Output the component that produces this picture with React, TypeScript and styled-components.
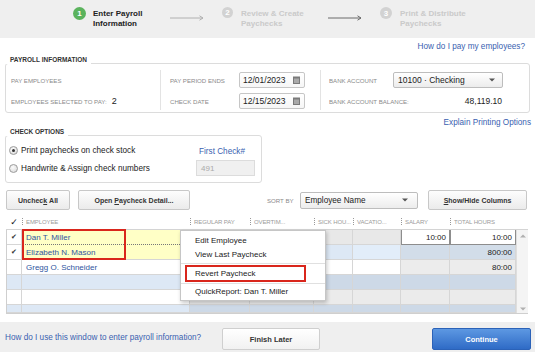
import React from "react";
import styled, { createGlobalStyle } from "styled-components";

const Global = createGlobalStyle`
  html, body { margin: 0; padding: 0; }
  body { font-family: "Liberation Sans", Arial, sans-serif; background: #fff; color: #222; }
  * { box-sizing: border-box; }
`;

const Page = styled.div`
  width: 535px;
  height: 352px;
  display: flex;
  flex-direction: column;
  overflow: hidden;
  background: #fff;
`;

/* ---------- Stepper ---------- */
const Stepper = styled.div`
  flex: none;
  height: 38px;
  background: #efefef;
  display: flex;
  align-items: flex-start;
  padding: 9px 0 0 73px;
`;
const Step = styled.div<{ $w?: number; $gap: number }>`
  flex: none;
  width: ${(p) => (p.$w ? `${p.$w}px` : "auto")};
  display: flex;
  align-items: flex-start;
  gap: ${(p) => p.$gap}px;
`;
const StepNum = styled.div<{ $active?: boolean; $size: number }>`
  flex: none;
  width: ${(p) => p.$size}px;
  height: ${(p) => p.$size}px;
  margin-top: -2px;
  border-radius: 50%;
  background: ${(p) => (p.$active ? "#5bb35d" : "#d2d2d2")};
  color: #fff;
  font-size: 8px;
  font-weight: bold;
  display: flex;
  align-items: center;
  justify-content: center;
`;
const StepText = styled.div<{ $active?: boolean }>`
  font-size: 8px;
  font-weight: bold;
  line-height: 10px;
  color: ${(p) => (p.$active ? "#222" : "#cacaca")};
`;
const ArrowBox = styled.div<{ $mr: number }>`
  flex: none;
  width: 34px;
  height: 6px;
  margin: 6px ${(p) => p.$mr}px 0 0;
  display: flex;
`;

/* ---------- Main ---------- */
const Main = styled.main`
  flex: 1;
  background: #fff;
  padding: 3px 4px 0 5px;
  display: flex;
  flex-direction: column;
`;
const LinkRow = styled.div<{ $mt: number; $pr: number }>`
  height: 12px;
  line-height: 12px;
  margin-top: ${(p) => p.$mt}px;
  padding-right: ${(p) => p.$pr}px;
  display: flex;
  justify-content: flex-end;
`;
const Link = styled.a`
  font-size: 8.2px;
  color: #3a5fb0;
  text-decoration: none;
  white-space: nowrap;
`;
const GroupTitle = styled.div<{ $mt: number }>`
  position: relative;
  z-index: 1;
  align-self: flex-start;
  margin-top: ${(p) => p.$mt}px;
  padding: 0 4px 0 5px;
  background: #fff;
  font-size: 6.5px;
  font-weight: bold;
  line-height: 8px;
  color: #333;
  text-transform: uppercase;
`;
const GroupBox = styled.div<{ $w?: number; $h: number }>`
  margin-top: -1px;
  width: ${(p) => (p.$w ? `${p.$w}px` : "auto")};
  margin-right: ${(p) => (p.$w ? 0 : 1)}px;
  height: ${(p) => p.$h}px;
  border: 1px solid #dcdcdc;
  border-radius: 3px;
  display: flex;
`;
const PayCol = styled.div<{ $w?: number; $pl: number; $divider?: boolean }>`
  flex: ${(p) => (p.$w ? "none" : "1")};
  width: ${(p) => (p.$w ? `${p.$w}px` : "auto")};
  height: 40px;
  margin-top: 6px;
  padding: 2px 0 0 ${(p) => p.$pl}px;
  border-left: ${(p) => (p.$divider ? "1px solid #e3e3e3" : "none")};
  display: flex;
  flex-direction: column;
  gap: 5px;
`;
const Field = styled.div`
  height: 16px;
  display: flex;
  align-items: center;
`;
const Label = styled.span<{ $w?: number }>`
  flex: none;
  width: ${(p) => (p.$w ? `${p.$w}px` : "auto")};
  font-size: 6.1px;
  color: #8a8a8a;
  text-transform: uppercase;
  white-space: nowrap;
`;
const Count = styled.span`
  margin-left: 5px;
  font-size: 9px;
  color: #222;
`;
const InputBox = styled.div<{ $w: number }>`
  width: ${(p) => p.$w}px;
  height: 16px;
  border: 1px solid #c6c6c6;
  border-radius: 2px;
  background: linear-gradient(#ffffff, #f6f6f6);
  padding: 0 4px 0 3px;
  display: flex;
  align-items: center;
  justify-content: space-between;
  font-size: 8.5px;
  color: #222;
`;
const SelectBox = styled(InputBox)`
  background: linear-gradient(#ffffff, #ececec);
  border-color: #bdbdbd;
  padding: 0 7px 0 4px;
`;
const Amount = styled.span`
  width: 110px;
  text-align: right;
  padding-right: 1px;
  font-size: 8.5px;
  color: #222;
`;

/* ---------- Check options ---------- */
const RadioCol = styled.div`
  width: 190px;
  padding: 8px 0 0 3px;
  display: flex;
  flex-direction: column;
  gap: 6px;
`;
const RadioRow = styled.label`
  height: 12px;
  display: flex;
  align-items: center;
  gap: 3px;
  font-size: 8.2px;
  color: #222;
`;
const Radio = styled.span<{ $on?: boolean }>`
  flex: none;
  width: 9px;
  height: 9px;
  border-radius: 50%;
  border: 1px solid #9c9c9c;
  background: radial-gradient(circle at 40% 35%, #fbfbfb, #d6d6d6);
  display: flex;
  align-items: center;
  justify-content: center;
  &::after {
    content: "";
    width: 3px;
    height: 3px;
    border-radius: 50%;
    background: ${(p) => (p.$on ? "#333" : "transparent")};
  }
`;
const FirstCheckCol = styled.div`
  width: 59px;
  padding-top: 10px;
  display: flex;
  flex-direction: column;
  gap: 2px;
`;
const FirstCheckLabel = styled.div`
  height: 12px;
  line-height: 12px;
  padding-left: 3px;
  font-size: 8.2px;
  color: #3a5fb0;
`;
const DisabledInput = styled.div`
  height: 16px;
  background: #f0f0f0;
  border: 1px solid #dcdcdc;
  padding-left: 4px;
  display: flex;
  align-items: center;
  font-size: 8px;
  color: #aaa;
`;

/* ---------- Buttons row ---------- */
const ButtonRow = styled.div`
  margin-top: 7px;
  height: 20px;
  display: flex;
  align-items: center;
`;
const Button = styled.button<{ $w: number; $ml: number }>`
  flex: none;
  width: ${(p) => p.$w}px;
  height: 20px;
  margin-left: ${(p) => p.$ml}px;
  padding: 0;
  border: 1px solid #c8c8c8;
  border-radius: 2px;
  background: linear-gradient(#fdfdfd, #ebebeb);
  font-family: "Liberation Sans", Arial, sans-serif;
  font-size: 7px;
  font-weight: bold;
  color: #333;
  display: flex;
  align-items: center;
  justify-content: center;
  u { text-decoration: underline; }
`;
const SortLabel = styled(Label)`
  margin-left: 77px;
  width: 33px;
`;
const SortSelect = styled(SelectBox)`
  height: 17px;
  font-size: 8.2px;
  padding-right: 9px;
`;

/* ---------- Table ---------- */
const Table = styled.div`
  position: relative;
  margin: 4px 0 0 1px;
  width: 522px;
`;
const HeaderRow = styled.div`
  height: 16px;
  display: flex;
  align-items: center;
  border-bottom: 1px solid #d4d4d4;
`;
const HeadCell = styled.div<{ $w: number }>`
  flex: none;
  width: ${(p) => p.$w}px;
  display: flex;
  align-items: center;
  font-size: 6px;
  letter-spacing: -0.1px;
  color: #9a9a9a;
  white-space: nowrap;
  &::before {
    content: "";
    display: block;
    flex: none;
    height: 7px;
    border-left: 1px dotted #999;
    margin-right: 3px;
  }
`;
const HeadCheck = styled.div`
  flex: none;
  width: 16px;
  text-align: center;
  font-family: "DejaVu Sans", sans-serif;
  font-size: 9px;
  font-weight: bold;
  color: #111;
`;
const Body = styled.div`
  display: flex;
  border-left: 1px solid #cfcfcf;
  border-bottom: 1px solid #cfcfcf;
`;
const Rows = styled.div`
  width: 509px;
  display: flex;
  flex-direction: column;
`;
const Row = styled.div<{ $h: number }>`
  flex: none;
  height: ${(p) => p.$h}px;
  display: flex;
  overflow: hidden;
`;
const Cell = styled.div<{
  $w: number;
  $bg: string;
  $right?: boolean;
  $boxed?: boolean;
  $dotted?: boolean;
  $blue?: boolean;
}>`
  flex: none;
  width: ${(p) => p.$w}px;
  height: 100%;
  background: ${(p) => p.$bg};
  border-right: 1px solid ${(p) => (p.$boxed ? "#8d8d8d" : "#d6d6d6")};
  border-bottom: ${(p) => (p.$dotted ? "1px dotted #777" : p.$boxed ? "1px solid #8d8d8d" : "1px solid #d6d6d6")};
  ${(p) => (p.$boxed ? "border-left: 1px solid #8d8d8d;" : "")}
  padding: 0 3px 0 4px;
  display: flex;
  align-items: center;
  justify-content: ${(p) => (p.$right ? "flex-end" : "flex-start")};
  font-size: 8px;
  color: ${(p) => (p.$blue ? "#2f55a0" : "#222")};
  white-space: nowrap;
`;
const CheckCell = styled(Cell)`
  justify-content: center;
  padding: 0;
  font-family: "DejaVu Sans", sans-serif;
  font-size: 7px;
  color: #333;
`;
const ScrollBar = styled.div`
  width: 12px;
  background: #f4f4f4;
  border-left: 1px solid #dedede;
  display: flex;
  flex-direction: column;
  justify-content: space-between;
  align-items: center;
  padding: 4px 0 2px;
`;
const Highlight = styled.div`
  position: absolute;
  left: 16px;
  top: 15px;
  width: 104px;
  height: 31px;
  border: 2px solid #d9261c;
  pointer-events: none;
`;
const Menu = styled.div`
  position: absolute;
  left: 174px;
  top: 16px;
  width: 146px;
  background: #fff;
  border: 1px solid #c6c6c6;
  box-shadow: 1px 2px 4px rgba(0, 0, 0, 0.22);
  padding: 3px 0 2px;
  z-index: 2;
`;
const MenuItem = styled.div<{ $h?: number }>`
  height: ${(p) => p.$h ?? 14}px;
  line-height: ${(p) => p.$h ?? 14}px;
  padding-left: 14px;
  font-size: 8px;
  color: #222;
  white-space: nowrap;
`;
const MenuSep = styled.div`
  height: 1px;
  margin: 1px 0;
  background: #e0e0e0;
`;
const MenuMarked = styled.div`
  height: 17px;
  margin: 0 19px 0 4px;
  border: 2px solid #d9261c;
  padding-left: 8px;
  display: flex;
  align-items: center;
  font-size: 8px;
  color: #222;
`;

/* ---------- Footer ---------- */
const Footer = styled.footer`
  flex: none;
  height: 30px;
  background: #efefef;
  padding: 4px 4px 0 5px;
  display: flex;
  align-items: center;
`;
const FooterLink = styled(Link)`
  width: 217px;
  margin-bottom: 4px;
`;
const FooterButton = styled.button<{ $primary?: boolean; $w: number }>`
  flex: none;
  width: ${(p) => p.$w}px;
  height: 22px;
  margin-left: ${(p) => (p.$primary ? "auto" : "0")};
  border-radius: 2px;
  border: 1px solid ${(p) => (p.$primary ? "#2b62b8" : "#cfcfcf")};
  background: ${(p) =>
    p.$primary ? "linear-gradient(#5d98e2, #2f6bc6)" : "linear-gradient(#ffffff, #f1f1f1)"};
  color: ${(p) => (p.$primary ? "#fff" : "#333")};
  font-family: "Liberation Sans", Arial, sans-serif;
  font-size: 7.5px;
  font-weight: bold;
`;

/* ---------- Icons ---------- */
const StepArrow = ({ color }: { color: string }) => (
  <svg width="34" height="6" viewBox="0 0 34 6">
    <line x1="0" y1="3" x2="33" y2="3" stroke={color} strokeWidth="1" />
    <polyline points="29.5,0.8 33,3 29.5,5.2" fill="none" stroke={color} strokeWidth="1" />
  </svg>
);
const CalendarIcon = () => (
  <svg width="7" height="8" viewBox="0 0 7 8">
    <rect x="0" y="0.5" width="7" height="7.5" fill="#7a7a7a" />
    <rect x="1" y="2.5" width="5" height="4.5" fill="#a9a9a9" />
  </svg>
);
const Caret = () => (
  <svg width="6" height="4" viewBox="0 0 6 4">
    <polygon points="0,0.5 6,0.5 3,3.5" fill="#555" />
  </svg>
);
const ScrollArrow = ({ up }: { up?: boolean }) => (
  <svg width="6" height="4" viewBox="0 0 6 4">
    <polygon points={up ? "0,3.5 6,3.5 3,0.5" : "0,0.5 6,0.5 3,3.5"} fill="#b0b0b0" />
  </svg>
);

/* ---------- Data ---------- */
const COLS = [60, 64, 39, 48, 49, 66];
const HEADERS = ["REGULAR PAY", "OVERTIM...", "SICK HOU...", "VACATIO...", "SALARY", "TOTAL HOURS"];
const W = "#ffffff";
const G = "#e8e8e8";
const LB = "#dde8f5";
const BG = "#cdd9e7";
const Y = "#ffffc6";

type C = { bg: string; text?: string; boxed?: boolean };
type R = { h: number; check?: boolean; name?: string; nameBg: string; checkBg: string; focus?: boolean; cells: C[] };

const ROWS: R[] = [
  {
    h: 15, check: true, name: "Dan T. Miller", nameBg: Y, checkBg: W, focus: true,
    cells: [{ bg: W }, { bg: W }, { bg: G }, { bg: G }, { bg: W, text: "10:00", boxed: true }, { bg: W, text: "10:00", boxed: true }],
  },
  {
    h: 15, check: true, name: "Elizabeth N. Mason", nameBg: Y, checkBg: W,
    cells: [{ bg: LB }, { bg: LB }, { bg: LB }, { bg: "#e2edf9" }, { bg: "#d2dde9" }, { bg: "#d2dde9", text: "800:00" }],
  },
  {
    h: 15, name: "Gregg O. Schneider", nameBg: W, checkBg: W,
    cells: [{ bg: W }, { bg: W }, { bg: W }, { bg: W }, { bg: "#ececec" }, { bg: "#ececec", text: "80:00" }],
  },
  { h: 15, nameBg: LB, checkBg: LB, cells: COLS.map(() => ({ bg: BG })) },
  { h: 15, nameBg: W, checkBg: W, cells: COLS.map(() => ({ bg: "#ebebeb" })) },
  { h: 8, nameBg: LB, checkBg: LB, cells: COLS.map(() => ({ bg: BG })) },
];

export default function App() {
  return (
    <>
      <Global />
      <Page>
        <Stepper>
          <Step $w={97} $gap={7}>
            <StepNum $active $size={13}>1</StepNum>
            <StepText $active>
              Enter Payroll
              <br />
              Information
            </StepText>
          </Step>
          <ArrowBox $mr={18}>
            <StepArrow color="#b0b0b0" />
          </ArrowBox>
          <Step $w={106} $gap={8}>
            <StepNum $size={11}>2</StepNum>
            <StepText>
              Review &amp; Create
              <br />
              Paychecks
            </StepText>
          </Step>
          <ArrowBox $mr={18}>
            <StepArrow color="#6a6a6a" />
          </ArrowBox>
          <Step $gap={8}>
            <StepNum $size={12}>3</StepNum>
            <StepText>
              Print &amp; Distribute
              <br />
              Paychecks
            </StepText>
          </Step>
        </Stepper>

        <Main>
          <LinkRow $mt={0} $pr={6}>
            <Link href="#">How do I pay my employees?</Link>
          </LinkRow>

          <GroupTitle $mt={3}>Payroll Information</GroupTitle>
          <GroupBox $h={50}>
            <PayCol $w={154} $pl={5}>
              <Field>
                <Label>Pay Employees</Label>
              </Field>
              <Field>
                <Label>Employees selected to pay:</Label>
                <Count>2</Count>
              </Field>
            </PayCol>
            <PayCol $w={160} $pl={9} $divider>
              <Field>
                <Label $w={69}>Pay Period Ends</Label>
                <InputBox $w={66}>
                  <span>12/01/2023</span>
                  <CalendarIcon />
                </InputBox>
              </Field>
              <Field>
                <Label $w={69}>Check Date</Label>
                <InputBox $w={66}>
                  <span>12/15/2023</span>
                  <CalendarIcon />
                </InputBox>
              </Field>
            </PayCol>
            <PayCol $pl={8} $divider>
              <Field>
                <Label $w={64}>Bank Account</Label>
                <SelectBox $w={110}>
                  <span>10100 · Checking</span>
                  <Caret />
                </SelectBox>
              </Field>
              <Field>
                <Label $w={64}>Bank Account Balance:</Label>
                <Amount>48,119.10</Amount>
              </Field>
            </PayCol>
          </GroupBox>

          <LinkRow $mt={4} $pr={0}>
            <Link href="#">Explain Printing Options</Link>
          </LinkRow>

          <GroupTitle $mt={-1}>Check Options</GroupTitle>
          <GroupBox $w={257} $h={48}>
            <RadioCol>
              <RadioRow>
                <Radio $on />
                Print paychecks on check stock
              </RadioRow>
              <RadioRow>
                <Radio />
                Handwrite &amp; Assign check numbers
              </RadioRow>
            </RadioCol>
            <FirstCheckCol>
              <FirstCheckLabel>First Check#</FirstCheckLabel>
              <DisabledInput>491</DisabledInput>
            </FirstCheckCol>
          </GroupBox>

          <ButtonRow>
            <Button $w={64} $ml={1}>
              Unchec<u>k</u>&nbsp;All
            </Button>
            <Button $w={112} $ml={8}>
              Open&nbsp;<u>P</u>aycheck Detail...
            </Button>
            <SortLabel>Sort by</SortLabel>
            <SortSelect $w={118}>
              <span>Employee Name</span>
              <Caret />
            </SortSelect>
            <Button $w={99} $ml={10}>
              <u>S</u>how/Hide Columns
            </Button>
          </ButtonRow>

          <Table>
            <HeaderRow>
              <HeadCheck>✓</HeadCheck>
              <HeadCell $w={168}>EMPLOYEE</HeadCell>
              {HEADERS.map((h, i) => (
                <HeadCell key={h} $w={COLS[i]}>
                  {h}
                </HeadCell>
              ))}
            </HeaderRow>
            <Body>
              <Rows>
                {ROWS.map((r, ri) => (
                  <Row key={ri} $h={r.h}>
                    <CheckCell $w={15} $bg={r.checkBg}>
                      {r.check ? "✔" : ""}
                    </CheckCell>
                    <Cell $w={168} $bg={r.nameBg} $blue $dotted={r.focus}>
                      {r.name}
                    </Cell>
                    {r.cells.map((c, ci) => (
                      <Cell key={ci} $w={COLS[ci]} $bg={c.bg} $right $boxed={c.boxed}>
                        {c.text}
                      </Cell>
                    ))}
                  </Row>
                ))}
              </Rows>
              <ScrollBar>
                <ScrollArrow up />
                <ScrollArrow />
              </ScrollBar>
            </Body>

            <Highlight />

            <Menu>
              <MenuItem>Edit Employee</MenuItem>
              <MenuItem>View Last Paycheck</MenuItem>
              <MenuSep />
              <MenuMarked>Revert Paycheck</MenuMarked>
              <MenuSep />
              <MenuItem $h={13}>QuickReport: Dan T. Miller</MenuItem>
            </Menu>
          </Table>
        </Main>

        <Footer>
          <FooterLink href="#">How do I use this window to enter payroll information?</FooterLink>
          <FooterButton $w={98}>Finish Later</FooterButton>
          <FooterButton $primary $w={99}>
            Continue
          </FooterButton>
        </Footer>
      </Page>
    </>
  );
}
